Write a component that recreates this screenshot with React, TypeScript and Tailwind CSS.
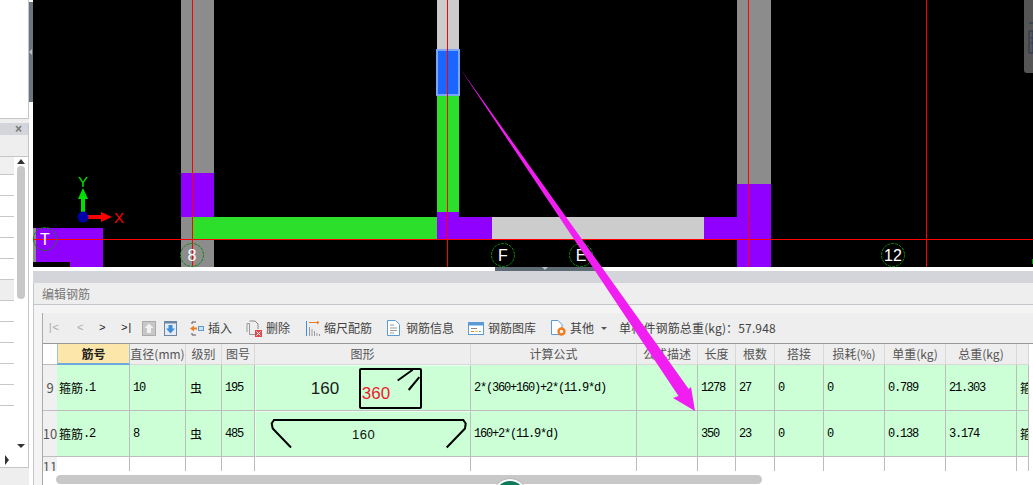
const COLS = "grid-cols-[14px_73px_56px_36px_33px_216px_166px_61px_38px_39px_49px_61px_61px_71px_12px]"

const headers = ["直径(mm)", "级别", "图号", "图形", "计算公式", "公式描述", "长度", "根数", "搭接", "损耗(%)", "单重(kg)", "总重(kg)", ""]

const rows = [
  { no: "9", name: "箍筋", idx: ".1", dia: "10", fig: "195", shape: <StirrupShape />, formula: "2*(360+160)+2*(11.9*d)", len: "1278", count: "27", unit: "0.789", total: "21.303" },
  { no: "10", name: "箍筋", idx: ".2", dia: "8", fig: "485", shape: <HookShape />, formula: "160+2*(11.9*d)", len: "350", count: "23", unit: "0.138", total: "3.174" },
]

function StirrupShape() {
  return (
    <svg width="214" height="44" viewBox="0 0 214 44" className="block">
      <rect x="104" y="3" width="61" height="39" rx="1" fill="none" stroke="#000" strokeWidth="2" />
      <path d="M141.700 14.500 L156.700 3.800 M152.700 24 L163.300 11.200" stroke="#000" strokeWidth="2" fill="none" />
      <text x="69" y="28" textAnchor="middle" fontSize="17" fontFamily="Liberation Sans, sans-serif" fill="#1a1a1a">160</text>
      <text x="120" y="33" textAnchor="middle" fontSize="17" fontFamily="Liberation Sans, sans-serif" fill="#f01a30">360</text>
    </svg>
  )
}

function HookShape() {
  return (
    <svg width="214" height="44" viewBox="0 0 214 44" className="block">
      <path d="M35 35.500 L16.700 16.500 L15.700 11.500 L18 8 L207.300 8 L209.700 11.500 L209 16.500 L190.700 35.500" fill="none" stroke="#000" strokeWidth="2" />
      <text x="107.700" y="27" textAnchor="middle" fontSize="13" letterSpacing="0.6" fontFamily="Liberation Sans, sans-serif" fill="#111">160</text>
    </svg>
  )
}

function Mono({ children }: { children: React.ReactNode }) {
  return <span className="font-['Liberation_Mono',monospace] text-[12px] tracking-[-1.2px] text-black">{children}</span>
}

function Cell({ children }: { children?: React.ReactNode }) {
  return <div className="flex items-center pl-[3px] border-r border-b border-[#bdbdbd] bg-[#ccffd6] overflow-hidden whitespace-nowrap">{children}</div>
}

function CadView() {
  return (
    <svg viewBox="33 0 1000 267" width="1000" height="267" className="block bg-black">
      {/* column 8 */}
      <rect x="181" y="0" width="33" height="173" fill="#8c8c8c" />
      <rect x="181" y="173" width="33" height="44" fill="#8f00ff" />
      <rect x="181" y="217" width="33" height="50" fill="#8c8c8c" />
      {/* beam along the axis */}
      <rect x="193" y="217" width="244" height="22" fill="#2bdf2b" />
      <rect x="437" y="217" width="55" height="22" fill="#8f00ff" />
      <rect x="492" y="217" width="212" height="22" fill="#cccccc" />
      <rect x="704" y="217" width="33" height="22" fill="#8f00ff" />
      {/* middle column */}
      <rect x="437" y="0" width="22" height="50" fill="#cccccc" />
      <rect x="437" y="95" width="22" height="117" fill="#2bdf2b" />
      <rect x="437" y="212" width="22" height="5" fill="#8f00ff" />
      <rect x="437" y="50" width="22" height="45" fill="#1a66ff" stroke="#7aa6f5" strokeWidth="2" />
      {/* right column */}
      <rect x="737" y="0" width="34" height="184" fill="#8c8c8c" />
      <rect x="737" y="184" width="34" height="83" fill="#8f00ff" />
      {/* corner block */}
      <rect x="33" y="228" width="3" height="34" fill="#8c8c8c" />
      <rect x="36" y="228" width="67" height="39" fill="#8f00ff" />
      <rect x="33" y="262" width="37" height="5" fill="#000" />
      {/* axis lines */}
      <path d="M33 239.500 H1033 M192.500 0 V267 M447.500 0 V267 M748.500 0 V267 M926.500 0 V267" stroke="#ff0000" strokeWidth="1" />
      {/* axis bubbles */}
      {[
        { x: 45, y: 239, t: "T" },
        { x: 192, y: 255, t: "8" },
        { x: 503, y: 255, t: "F" },
        { x: 581, y: 255, t: "E" },
        { x: 893, y: 255, t: "12" },
      ].map((b) => (
        <g key={b.t}>
          <circle cx={b.x} cy={b.y} r="11.500" fill="none" stroke="#0a8a0a" strokeWidth="1" strokeDasharray="3 1" />
          <text x={b.x} y={b.y + 6} textAnchor="middle" fontSize="16" fontFamily="Liberation Sans, sans-serif" fill="#fff">{b.t}</text>
        </g>
      ))}
      {/* coordinate gizmo */}
      <rect x="81" y="199" width="4" height="14" fill="#00e000" />
      <path d="M83 188 L88 199 H78 Z" fill="#00e000" />
      <rect x="87" y="215" width="15" height="4" fill="#ff0000" />
      <path d="M101 212 L112 217 L101 222 Z" fill="#ff0000" />
      <circle cx="83" cy="217" r="5.500" fill="#0000a8" />
      <text x="83" y="187" textAnchor="middle" fontSize="15" fontFamily="Liberation Sans, sans-serif" fill="#00e000">Y</text>
      <text x="119" y="223" textAnchor="middle" fontSize="15" fontFamily="Liberation Sans, sans-serif" fill="#ff0000">X</text>
      {/* floating toolbar, right edge */}
      <path d="M1033 0 H1024 V70 Q1024 73 1027 73 H1033 Z" fill="#555" />
      <path d="M1029 23 H1033 M1029 31 H1033 V53 H1029 Z M1031 38 H1033 M1031 43 H1033" fill="none" stroke="#2b3550" />
      <rect x="1032" y="259" width="1" height="5" fill="#0a8a0a" />
    </svg>
  )
}

function LeftPanel() {
  const lines = Array(11).fill(0)
  return (
    <aside className="w-[33px] shrink-0 flex">
      <div className="w-[29px] flex flex-col bg-[#eeeeee]">
        <div className="h-[119px] bg-white border-r border-b border-[#c4c6cc]" />
        <div className="h-[4px]" />
        <div className="h-[345px] flex flex-col border-r border-b border-[#c4c6cc]">
          <div className="h-[12px] bg-[#d3d5da] flex items-center justify-end pr-[6px] text-[12px] leading-none font-bold text-[#777] font-['Liberation_Sans',sans-serif]">×</div>
          <div className="h-[22px] bg-[#eeeeee] border-b border-[#c4c6cc]" />
          <div className="flex-1 flex bg-white">
            <div className="w-[14px] flex flex-col">
              <div className="h-[18px] bg-[#f0f0f0] border-b border-[#c8c8c8]" />
              {lines.map((_, i) => (
                <div key={i} className={i === 5 ? "h-[21px] bg-[#eeeeee] border-b border-[#c8c8c8]" : "h-[21px] border-b border-[#c8c8c8]"} />
              ))}
              <div className="mt-auto h-[19px] flex items-center justify-center">
                <div className="mt-[5px] border-y-[5px] border-l-[4px] border-y-transparent border-l-[#333]" />
              </div>
            </div>
            <div className="flex-1 flex flex-col items-center pr-[1px]">
              <div className="mt-[2px] border-x-[4px] border-b-[5px] border-x-transparent border-b-[#333]" />
              <div className="mt-[2px] w-[8px] h-[133px] rounded-full bg-[#c8c8c8]" />
              <div className="mt-[145px] border-x-[4px] border-t-[4px] border-x-transparent border-t-[#333]" />
            </div>
          </div>
        </div>
      </div>
      <div className="w-[4px] bg-white pt-[2px]">
        <div className="h-[100px] bg-[#6b7580] flex items-center">
          <div className="border-y-[3px] border-r-[3px] border-y-transparent border-r-[#b8bdc2]" />
        </div>
      </div>
    </aside>
  )
}

function ToolText({ children }: { children: React.ReactNode }) {
  return <span className="text-[12px] text-[#444]">{children}</span>
}

function Toolbar() {
  return (
    <div className="h-[31px] flex items-center border-b border-[#999] text-[#555] font-['Liberation_Mono',monospace] text-[11px]">
      <span className="ml-[4px] w-[30px] text-[#aaa] tracking-[-1px]">|&lt;</span>
      <span className="w-[22px] text-[#aaa]">&lt;</span>
      <span className="w-[22px] text-[#222]">&gt;</span>
      <span className="w-[21px] text-[#222] tracking-[-1px]">&gt;|</span>
      <svg width="14" height="15" viewBox="0 0 14 15" className="block">
        <rect x="0.500" y="0.500" width="13" height="14" fill="#c7c7c7" stroke="#aaa" />
        <path d="M7 2.500 L11.500 7 H9 V12 H5 V7 H2.500 Z" fill="#f2f2f2" />
      </svg>
      <svg width="13" height="15" viewBox="0 0 13 15" className="block ml-[8px]">
        <rect x="0.500" y="0.500" width="12" height="14" fill="#e8ecf2" stroke="#6d86a3" />
        <rect x="0.500" y="0.500" width="12" height="2" fill="#6d86a3" />
        <path d="M6.500 12.500 L11 7.500 H8.500 V4 H4.500 V7.500 H2 Z" fill="#3c8fdc" />
      </svg>
      <svg width="14" height="15" viewBox="0 0 14 15" className="block ml-[13px]">
        <path d="M2 1 H6 M2 14 H6 M2 1 V3 M2 12 V14" stroke="#555" fill="none" />
        <path d="M0 7.500 L4 4.500 V6.500 H7 V8.500 H4 V10.500 Z" fill="#ee7d22" />
        <rect x="8.500" y="5.500" width="5" height="4" fill="#cfe2f3" stroke="#5b9bd5" />
      </svg>
      <span className="ml-[4px] font-['Noto_Sans_CJK_SC',sans-serif]"><ToolText>插入</ToolText></span>
      <svg width="16" height="17" viewBox="0 0 16 17" className="block ml-[14px]">
        <path d="M3.500 3.500 V14.500 H9 M3.500 3.500 H1 V12" fill="none" stroke="#999" />
        <path d="M3.500 1 H9 L12 4 V9" fill="none" stroke="#888" />
        <rect x="9" y="10" width="7" height="7" fill="#e0464a" />
        <path d="M10.500 11.500 L14.500 15.500 M14.500 11.500 L10.500 15.500" stroke="#fff" />
      </svg>
      <span className="ml-[4px] font-['Noto_Sans_CJK_SC',sans-serif]"><ToolText>删除</ToolText></span>
      <svg width="14" height="15" viewBox="0 0 14 15" className="block ml-[16px]">
        <path d="M3 1.500 H13 M11 0 L13 1.500 L11 3" stroke="#ee7d22" fill="none" />
        <path d="M0.500 0 V15" stroke="#3c8fdc" />
        <path d="M3.500 6 V15 M6 8 V15 M8.500 10 V15 M11 12 V15 M13.500 13 V15" stroke="#999" />
      </svg>
      <span className="ml-[4px] font-['Noto_Sans_CJK_SC',sans-serif]"><ToolText>缩尺配筋</ToolText></span>
      <DocIcon className="block ml-[15px]" />
      <span className="ml-[6px] font-['Noto_Sans_CJK_SC',sans-serif]"><ToolText>钢筋信息</ToolText></span>
      <svg width="16" height="13" viewBox="0 0 16 13" className="block ml-[14px]">
        <rect x="0.500" y="0.500" width="15" height="12" fill="#fff" stroke="#5b9bd5" />
        <rect x="0.500" y="0.500" width="15" height="3" fill="#5b9bd5" />
        <path d="M3 6.500 H9" stroke="#888" />
        <path d="M3 9.500 H6" stroke="#ee7d22" />
        <path d="M7 9.500 H10" stroke="#e4c04a" />
        <path d="M11 9.500 H13" stroke="#7cb37c" />
      </svg>
      <span className="ml-[4px] font-['Noto_Sans_CJK_SC',sans-serif]"><ToolText>钢筋图库</ToolText></span>
      <svg width="15" height="16" viewBox="0 0 15 16" className="block ml-[15px]">
        <path d="M8 14.500 H0.500 V0.500 H7 L11 4.500 V8" fill="#fff" stroke="#5b9bd5" />
        <circle cx="10.500" cy="11.500" r="3" fill="none" stroke="#ee7d22" strokeWidth="2.400" />
      </svg>
      <span className="ml-[4px] font-['Noto_Sans_CJK_SC',sans-serif]"><ToolText>其他</ToolText></span>
      <div className="ml-[7px] border-x-[3px] border-t-[3px] border-x-transparent border-t-[#555]" />
      <span className="ml-[12px] font-['Noto_Sans_CJK_SC',sans-serif] whitespace-nowrap tracking-[0.15px]"><ToolText>单构件钢筋总重(kg)：57.948</ToolText></span>
    </div>
  )
}

function DocIcon({ className }: { className?: string }) {
  return (
    <svg width="13" height="16" viewBox="0 0 13 16" className={className}>
      <path d="M0.500 0.500 H8.500 L12.500 4.500 V15.500 H0.500 Z" fill="#fff" stroke="#5b9bd5" />
      <path d="M3 5 H7 M3 8 H10 M3 10.500 H10 M3 13 H7" stroke="#999" />
    </svg>
  )
}

function Table() {
  return (
    <div className={`grid ${COLS} grid-rows-[21px_46px_46px_14px] font-['Noto_Sans_CJK_SC',sans-serif] text-[12px]`}>
      <div className="bg-white border-b border-[#bdbdbd]" />
      <div className="flex items-center justify-center bg-[#fde6aa] border-b-2 border-x border-b-[#6fa8dc] border-x-[#9cc2e5] font-bold text-[#222]">筋号</div>
      {headers.map((h, i) => (
        <div key={i} className="flex items-center justify-center bg-[#eeeeee] text-[#555] border-r border-b border-[#d8d8d8] whitespace-nowrap overflow-hidden">{h}</div>
      ))}
      {rows.map((r) => (
        <div key={r.no} className="contents">
          <div className="flex items-center justify-center bg-[#f0f0f0] text-[#555] border-b border-[#bdbdbd] text-[13px]">{r.no}</div>
          <Cell><span className="-ml-[1px] text-black">{r.name}</span><Mono>{r.idx}</Mono></Cell>
          <Cell><Mono>{r.dia}</Mono></Cell>
          <Cell><span className="ml-[1px] text-black">虫</span></Cell>
          <Cell><Mono>{r.fig}</Mono></Cell>
          <div className="border border-[#eafff0] border-r-[#bdbdbd] border-b-[#bdbdbd] bg-[#ccffd6] overflow-hidden">{r.shape}</div>
          <Cell><Mono>{r.formula}</Mono></Cell>
          <Cell />
          <Cell><Mono>{r.len}</Mono></Cell>
          <Cell><Mono>{r.count}</Mono></Cell>
          <Cell><Mono>0</Mono></Cell>
          <Cell><Mono>0</Mono></Cell>
          <Cell><Mono>{r.unit}</Mono></Cell>
          <Cell><Mono>{r.total}</Mono></Cell>
          <Cell><span className="text-black">箍</span></Cell>
        </div>
      ))}
      <div className="bg-[#f0f0f0] text-[#555] text-[13px] leading-none flex justify-center pt-[3px] overflow-hidden">11</div>
      {Array(14).fill(0).map((_, i) => (
        <div key={i} className="bg-white border-r border-[#bdbdbd]" />
      ))}
    </div>
  )
}

export default function App() {
  return (
    <div className="relative flex w-[1033px] h-[485px] overflow-hidden bg-white font-['Noto_Sans_CJK_SC',sans-serif]">
      <LeftPanel />
      <main className="w-[1000px] flex flex-col">
        <CadView />
        <div className="h-[4px] bg-white">
          <div className="ml-[462px] w-[100px] h-full bg-[#5f6b75] flex justify-center">
            <div className="border-x-[3px] border-t-[3px] border-x-transparent border-t-[#c0c4c8]" />
          </div>
        </div>
        <div className="h-[12px] bg-[#d3d5da]" />
        <div className="h-[22px] flex items-center pl-[8px] bg-[#eeeeee] border-l border-b border-[#c4c6cc] text-[12px] text-[#777]">编辑钢筋</div>
        <div className="flex-1 bg-[#f4f4f4] border-l border-[#c4c6cc] pt-[8px] pl-[8px]">
          <div className="h-full bg-[#eeeeee] border-l border-[#aaa]">
            <Toolbar />
            <div className="bg-white h-full">
              <Table />
              <div className="ml-[13px] mt-[4px] w-[706px] h-[9px] rounded-full bg-[#c8c8c8]" />
            </div>
          </div>
        </div>
      </main>

      {/* callout arrow drawn over the screen */}
      <svg viewBox="0 0 1033 485" width="1033" height="485" className="absolute inset-0 pointer-events-none">
        <path d="M460.500 69 L688.700 389 L691 387 L695 411 L673 398 L678.500 396 Z" fill="#f01ef0" />
      </svg>

      {/* badge cut off by the bottom edge */}
      <div className="absolute left-[493px] top-[479px] w-[34px] h-[34px] rounded-full bg-[#0f7a5a] border-2 border-white outline outline-[#bbb]" />
    </div>
  )
}
